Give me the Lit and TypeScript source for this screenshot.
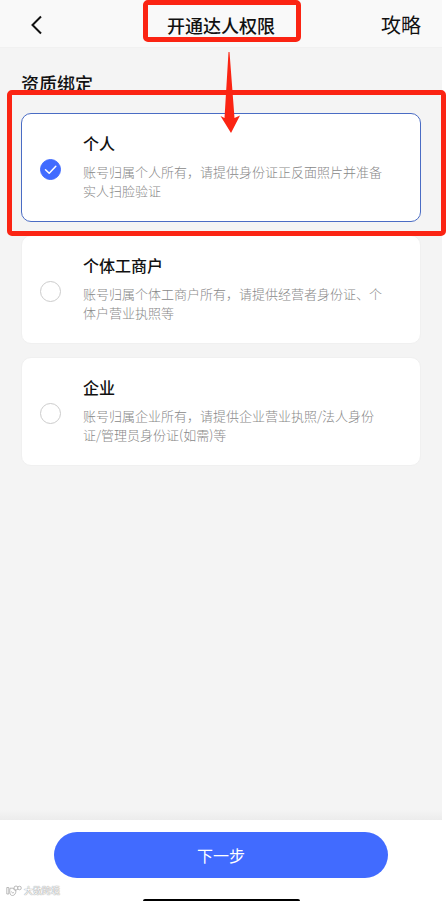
import { LitElement, html, css, svg } from "lit";
import { customElement, state } from "lit/decorators.js";

interface Option {
  id: string;
  name: string;
  note: string;
}

const OPTIONS: Option[] = [
  { id: "person", name: "个人", note: "账号归属个人所有，请提供身份证正反面照片并准备实人扫脸验证" },
  { id: "trader", name: "个体工商户", note: "账号归属个体工商户所有，请提供经营者身份证、个体户营业执照等" },
  { id: "company", name: "企业", note: "账号归属企业所有，请提供企业营业执照/法人身份证/管理员身份证(如需)等" },
];

const tick = svg`<path d="M5.5 10.8 9.2 14.3 15.8 7.2" fill="none" stroke="#fff" stroke-width="1.5" stroke-linecap="round" stroke-linejoin="round"/>`;

@customElement("app-root")
export class AppRoot extends LitElement {
  static styles = css`
    :host {
      display: flex;
      flex-direction: column;
      min-height: 100vh;
      background: #fff;
      color: #111;
      font-family: "Noto Sans CJK SC", "Liberation Sans", sans-serif;
    }
    * {
      box-sizing: border-box;
    }
    button {
      font: inherit;
      color: inherit;
      border: 0;
      padding: 0;
      background: none;
      cursor: pointer;
    }
    .screen {
      flex: 1;
      display: flex;
      flex-direction: column;
      margin-right: 6px;
      background: #f4f4f4;
    }
    .bar {
      display: grid;
      grid-template-columns: 1fr auto 1fr;
      align-items: center;
      height: 48px;
      padding: 2px 21px 0 28px;
      background: #f9f9f9;
      border-bottom: 1px solid #f1f1f1;
    }
    .back {
      display: flex;
      justify-self: start;
    }
    .title {
      position: relative;
      margin: 0 7px 0 0;
      font-size: 18px;
      line-height: 24px;
      font-weight: 500;
    }
    .guide {
      justify-self: end;
      color: #111;
      text-decoration: none;
      font-size: 20px;
      line-height: 24px;
    }
    .mark {
      position: absolute;
      border: 5px solid #fb2413;
      border-radius: 5px;
      pointer-events: none;
      z-index: 1;
    }
    .mark-title {
      inset: -13px -26px -5px -24px;
    }
    .mark-card {
      inset: -24px -26px -15px -15px;
    }
    .arrow {
      position: absolute;
      left: 53px;
      top: 39px;
      z-index: 2;
      pointer-events: none;
    }
    .content {
      flex: 1;
      padding: 23px 21px;
    }
    .heading {
      margin: 0 0 18px;
      font-size: 18px;
      line-height: 24px;
      font-weight: 500;
    }
    .options {
      display: flex;
      flex-direction: column;
      gap: 13px;
      margin: 0;
      padding: 0;
      border: 0;
    }
    .card {
      position: relative;
      display: grid;
      grid-template-columns: 21px 1fr;
      column-gap: 22px;
      align-items: center;
      padding: 18px 36px 21px 18px;
      border: 1px solid #f0f0f0;
      border-radius: 10px;
      background: #fff;
      cursor: pointer;
    }
    .card.on {
      border-color: #4a6cc4;
    }
    .pick {
      display: grid;
      margin-top: 6px;
    }
    .radio,
    .tick {
      grid-area: 1 / 1;
      width: 21px;
      height: 21px;
    }
    .radio {
      appearance: none;
      margin: 0;
      border: 1px solid #ccc;
      border-radius: 50%;
      background: #fff;
    }
    .radio:checked {
      border-color: #416bff;
      background: #416bff;
    }
    .tick {
      pointer-events: none;
      z-index: 1;
    }
    .name {
      display: block;
      margin-bottom: 8px;
      font-size: 16px;
      line-height: 22px;
      font-weight: 500;
    }
    .note {
      display: block;
      font-size: 13px;
      line-height: 19px;
      font-weight: 300;
      color: #888;
    }
    .shade {
      height: 10px;
      background: linear-gradient(#f4f4f4, #ececec);
    }
    .foot {
      display: grid;
      grid-template-columns: 1fr;
      padding-top: 12px;
      background: #fff;
    }
    .next {
      height: 46px;
      margin: 0 60px 0 54px;
      border-radius: 23px;
      background: #416bff;
      color: #fff;
      font-size: 16px;
      line-height: 22px;
    }
    .base {
      display: grid;
      grid-template-columns: 1fr 157px 1fr;
      align-items: end;
      height: 23px;
      padding-right: 6px;
    }
    .credit {
      display: flex;
      align-items: center;
      gap: 2px;
      padding: 0 0 3px 6px;
      color: #fff;
      font-size: 9px;
      line-height: 14px;
      text-shadow: 0 0 1px #888, 0 0 1px #999;
    }
    .home {
      height: 2px;
      border-radius: 2px 2px 0 0;
      background: #000;
    }
  `;

  @state() private chosen = "person";

  private card(o: Option) {
    const on = o.id === this.chosen;
    return html`
      <label class="card ${on ? "on" : ""}">
        <span class="pick">
          <input class="radio" type="radio" name="kind" .checked=${on} @change=${() => (this.chosen = o.id)} />
          ${on ? html`<svg class="tick" viewBox="0 0 21 21" aria-hidden="true">${tick}</svg>` : ""}
        </span>
        <span>
          <span class="name">${o.name}</span>
          <span class="note">${o.note}</span>
        </span>
        ${o.id === "person" ? html`<span class="mark mark-card"></span>` : ""}
      </label>
    `;
  }

  render() {
    return html`
      <div class="screen">
        <header class="bar">
          <button class="back" type="button" aria-label="返回">
            <svg width="18" height="20" viewBox="0 0 18 20" aria-hidden="true">
              <path d="M13 1.5 4.5 10 13 18.5" fill="none" stroke="#111" stroke-width="2" />
            </svg>
          </button>
          <h1 class="title">
            开通达人权限
            <span class="mark mark-title"></span>
            <svg class="arrow" width="22" height="82" viewBox="0 0 22 82" aria-hidden="true">
              <path d="M8.5 0h1L14.5 66 20 63.5 11 81 .5 64 4.5 66Z" fill="#fb2413" />
            </svg>
          </h1>
          <a class="guide" href="#">攻略</a>
        </header>
        <main class="content">
          <h2 class="heading" id="heading">资质绑定</h2>
          <fieldset class="options" aria-labelledby="heading">${OPTIONS.map((o) => this.card(o))}</fieldset>
        </main>
        <div class="shade"></div>
      </div>
      <footer class="foot">
        <button class="next" type="button">下一步</button>
        <div class="base">
          <span class="credit">
            <svg width="16" height="12" viewBox="0 0 16 12" fill="#fff" stroke="#aaa" stroke-width="0.8" aria-hidden="true">
              <path d="M.8 2.5h2v6.5h-2zM4 3.2h3.5c.3 1.6 1 2.3 2.5 2.5-.2 3-1.5 4.8-3.5 4.8S3.2 9 4 3.2Z" />
              <circle cx="10" cy="3" r="2" />
              <circle cx="13.5" cy="3" r="1.8" />
              <path d="M5.5 6.5c.3 1.5 1.5 1.8 2.5.8" fill="none" />
            </svg>
            大数跨境
          </span>
          <span class="home"></span>
        </div>
      </footer>
    `;
  }
}
